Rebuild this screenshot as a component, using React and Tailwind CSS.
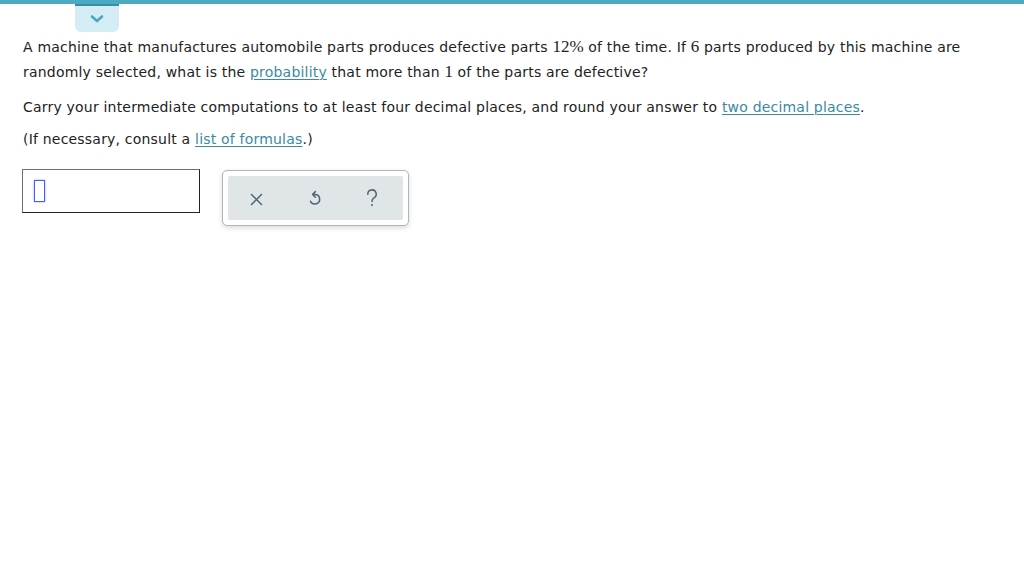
import React from "react";

const M = ({ children }) => (
  <span className="font-serif text-[17px] leading-none tracking-normal" style={{ fontFamily: "'Liberation Serif', 'Times New Roman', 'DejaVu Serif', serif" }}>{children}</span>
);

const A = ({ children }) => (
  <span className="text-[#3a8aa3] underline decoration-1 underline-offset-2">{children}</span>
);

export default function App() {
  return (
    <div className="relative w-[1024px] h-[581px] bg-white overflow-hidden text-[14px] tracking-[0.2px] text-[#222] [font-family:'DejaVu_Sans',Verdana,sans-serif]">
      <div className="h-[4px] bg-[#4ba9c2]" />
      <div className="absolute left-[75px] top-[4px] w-[44px] h-[28px] bg-[#d4edf4] rounded-b-[6px] border-t-[2px] border-[#3a8ca3] flex items-center justify-center">
        <svg width="14" height="10" viewBox="0 0 14 10">
          <path d="M2 2.5 L7 7 L12 2.5" fill="none" stroke="#4aa8c2" strokeWidth="2.6" strokeLinecap="round" strokeLinejoin="round" />
        </svg>
      </div>
      <div className="pl-[23px] pr-[40px] pt-[31px]">
        <p className="leading-[25px]">
          A machine that manufactures automobile parts produces defective parts <M>12%</M> of the time. If <M>6</M> parts produced by this machine are randomly selected, what is the <A>probability</A> that more than <M>1</M> of the parts are defective?
        </p>
        <p className="leading-[25px] mt-[10px]">
          Carry your intermediate computations to at least four decimal places, and round your answer to <A>two decimal places</A>.
        </p>
        <p className="leading-[25px] mt-[7px]">
          (If necessary, consult a <A>list of formulas</A>.)
        </p>
        <div className="flex items-start mt-[17px] -ml-[1px]">
          <div className="w-[178px] h-[44px] border border-t-[#6e6e6e] border-l-[#6e6e6e] border-r-[#222] border-b-[#222] flex items-center pl-[11px]">
            <div className="w-[11px] h-[22px] border-[1.5px] border-[#4a5cf0] shadow-[0_0_2px_#9aa6ff]" />
          </div>
          <div className="ml-[22px] mt-[1px] w-[187px] h-[56px] rounded-[5px] border border-[#a8b9c0] bg-white p-[5px] shadow-[0_2px_5px_rgba(0,0,0,0.15)]">
            <div className="w-full h-full bg-[#e0e5e8] rounded-[2px] flex items-center justify-between pl-[22px] pr-[25px]">
              <svg width="13" height="13" viewBox="0 0 13 13" className="mt-[2px]">
                <path d="M1.5 1.5 L11.5 11.5 M11.5 1.5 L1.5 11.5" stroke="#4f6570" strokeWidth="1.5" strokeLinecap="round" />
              </svg>
              <svg width="14" height="17" viewBox="0 0 14 17" className="mt-[1px]">
                <path d="M6 4.4 H7 A4.8 4.8 0 1 1 2.5 11.2" fill="none" stroke="#4f6570" strokeWidth="1.5" strokeLinecap="round" />
                <path d="M7.4 1.6 L4.6 4.4 L7.4 7.2" fill="none" stroke="#4f6570" strokeWidth="1.5" strokeLinecap="round" strokeLinejoin="round" />
              </svg>
              <svg width="12" height="18" viewBox="0 0 12 18">
                <path d="M1.8 5.2 A4.2 4.2 0 1 1 8 8.8 Q6 10 6 12.6" fill="none" stroke="#4f6570" strokeWidth="1.5" strokeLinecap="round" />
                <circle cx="6" cy="16" r="1" fill="#4f6570" />
              </svg>
            </div>
          </div>
        </div>
      </div>
    </div>
  );
}
